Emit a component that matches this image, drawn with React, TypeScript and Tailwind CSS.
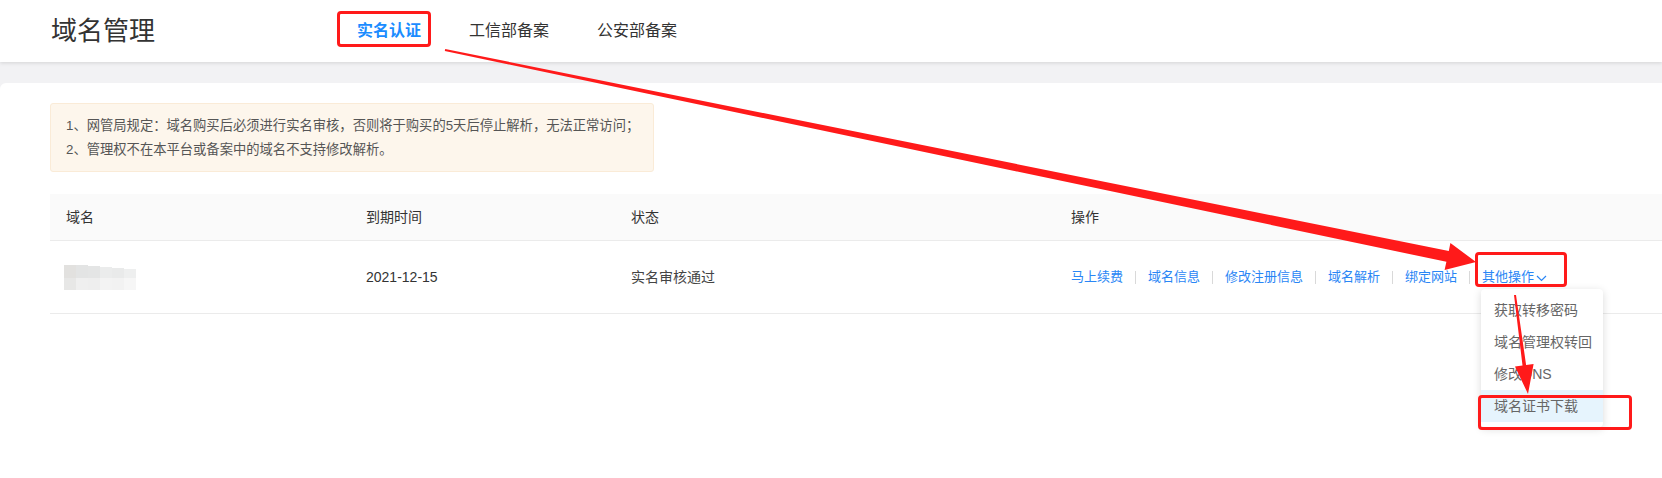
import { useState } from "react";

const actions = ["马上续费", "域名信息", "修改注册信息", "域名解析", "绑定网站"];
const moreItems = ["获取转移密码", "域名管理权转回", "修改DNS", "域名证书下载"];

export default function App() {
    return (
        <div className="relative h-[478px] w-[1662px] overflow-hidden bg-[#f2f2f4] font-['Liberation_Sans','Noto_Sans_CJK_SC',sans-serif] text-[#333]">
            <Header />
            <div className="h-[21px]" />
            <div className="rounded-tl-[6px] bg-white pl-[50px] pt-[20px] h-[395px]">
                <Notice />
                <DomainTable />
            </div>
            <Annotations />
        </div>
    )
}

function Header() {
    const [active, setActive] = useState(0)
    const tabs = ["实名认证", "工信部备案", "公安部备案"]
    return (
        <div className="relative z-10 flex h-[62px] items-center bg-white pl-[51px] shadow-[0_1px_4px_rgba(0,0,0,0.13)]">
            <h1 className="w-[282px] text-[26px] leading-none font-normal text-[#333]">域名管理</h1>
            <div className="flex items-center">
                {tabs.map((t, i) => (
                    <button
                        key={t}
                        onClick={() => setActive(i)}
                        className={i === active
                            ? "px-6 text-[16px] font-bold text-[#1a8cff] leading-[24px]"
                            : "px-6 text-[16px] text-[#333] leading-[24px]"}
                    >
                        {t}
                    </button>
                ))}
            </div>
        </div>
    )
}

function Notice() {
    return (
        <div className="w-[604px] h-[69px] overflow-hidden whitespace-nowrap rounded-[3px] border border-[#faebd7] bg-[#fdf6ec] pl-[15px] pr-[4px] py-[10px] text-[13.3px] leading-[24px] text-[#555]">
            <p>1、网管局规定：域名购买后必须进行实名审核，否则将于购买的5天后停止解析，无法正常访问；</p>
            <p>2、管理权不在本平台或备案中的域名不支持修改解析。</p>
        </div>
    )
}

function DomainTable() {
    return (
        <div className="mt-[22px] text-[14px]">
            <div className="grid h-[47px] grid-cols-[300px_265px_440px_1fr] items-center border-b border-[#ebebeb] bg-[#fafafa]">
                <div className="px-4">域名</div>
                <div className="px-4">到期时间</div>
                <div className="px-4">状态</div>
                <div className="px-4">操作</div>
            </div>
            <div className="grid h-[73px] grid-cols-[300px_265px_440px_1fr] items-center border-b border-[#ebebeb]">
                <div className="pl-[14px]">
                    <BlurredName />
                </div>
                <div className="px-4">2021-12-15</div>
                <div className="px-4 text-[#444]">实名审核通过</div>
                <div className="flex items-center px-4 text-[13px] text-[#2a86f5]">
                    {actions.map((a) => (
                        <span key={a} className="flex items-center">
                            <a className="cursor-pointer">{a}</a>
                            <span className="mx-3 h-[13px] w-px bg-[#d9d9d9]" />
                        </span>
                    ))}
                    <div className="relative">
                        <a className="flex cursor-pointer items-center">
                            其他操作
                            <svg width="11" height="7" viewBox="0 0 11 7" className="ml-[2px] mt-[2px]">
                                <polyline points="1,1 5.5,5.5 10,1" fill="none" stroke="#2a86f5" strokeWidth="1.2" />
                            </svg>
                        </a>
                        <div className="absolute left-[-1px] top-[22px] z-10 w-[122px] rounded-[4px] bg-white py-[5px] shadow-[0_2px_8px_rgba(0,0,0,0.15)]">
                            {moreItems.map((m, i) => (
                                <div
                                    key={m}
                                    className={i === 3
                                        ? "flex h-8 items-center bg-[#e6f4fd] pl-[13px] text-[14px] text-[#666]"
                                        : "flex h-8 items-center pl-[13px] text-[14px] text-[#666]"}
                                >
                                    {m}
                                </div>
                            ))}
                        </div>
                    </div>
                </div>
            </div>
        </div>
    )
}

function BlurredName() {
    const top = ["#e2e1df", "#e3e4e4", "#e4e5e5", "#ebecec", "#e9eaea", "#eeefef"]
    const bottom = ["#e7e7e6", "#efefef", "#eeeeee", "#f3f3f3", "#f2f2f2", "#f6f6f6"]
    const offs = [0, 0, 1, 2, 3, 4]
    return (
        <div className="flex w-[72px] flex-col">
            <div className="flex h-[13px] items-end">
                {top.map((c, i) => <div key={i} className="w-[12px]" style={{ background: c, height: 13 - offs[i] }} />)}
            </div>
            <div className="flex h-[12px]">
                {bottom.map((c, i) => <div key={i} className="h-full w-[12px]" style={{ background: c }} />)}
            </div>
        </div>
    )
}

function Annotations() {
    return (
        <>
            <div className="pointer-events-none absolute left-[337px] top-[11px] z-20 h-[36px] w-[94px] rounded-[4px] border-[3px] border-[#ff1a1a]" />
            <div className="pointer-events-none absolute left-[1475px] top-[252px] z-20 h-[35px] w-[92px] rounded-[4px] border-[3px] border-[#ff1a1a]" />
            <div className="pointer-events-none absolute left-[1478px] top-[395px] z-20 h-[35px] w-[154px] rounded-[4px] border-[3px] border-[#ff1a1a]" />
            <svg className="pointer-events-none absolute left-0 top-0 z-30" width="1662" height="478" viewBox="0 0 1662 478">
                <polygon
                    fill="#ff1a1a"
                    points="445.2,49 1448.8,251 1450.4,243 1476,262 1444.6,270 1446.4,261.8 444.8,51"
                />
                <polygon
                    fill="#ff1a1a"
                    points="1516,294.9 1526.1,365 1533.6,364 1528,394 1515,366.4 1522.5,365.4 1514,295.1"
                />
            </svg>
        </>
    )
}
